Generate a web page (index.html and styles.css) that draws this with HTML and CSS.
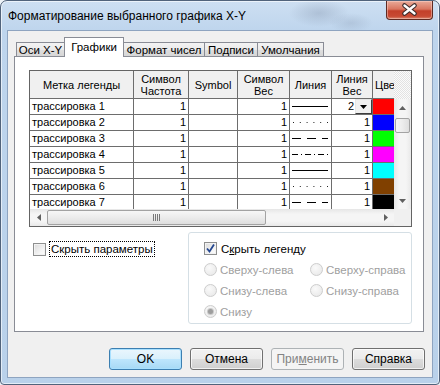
FILE: index.html
```html
<!DOCTYPE html>
<html lang="ru">

<head>
    <meta charset="UTF-8">
    <title>Форматирование выбранного графика X-Y</title>
    <link rel="stylesheet" href="styles.css">
</head>

<body>

    <div class="window">
        <div class="titlebar">
            <span class="title">Форматирование выбранного графика X-Y</span>
            <div class="close">
                <svg width="45" height="17" viewBox="0 0 45 17">
                    <path d="M17.5 4.5 L27.5 12.5 M27.5 4.5 L17.5 12.5" stroke="#3a2a2a" stroke-width="4.6" stroke-linecap="round" fill="none"/>
                    <path d="M17.5 4.5 L27.5 12.5 M27.5 4.5 L17.5 12.5" stroke="#ffffff" stroke-width="2.4" stroke-linecap="round" fill="none"/>
                </svg>
            </div>
        </div>

        <div class="client">
            <div class="tabs">
                <div class="tab t1">Оси X-Y</div>
                <div class="tab t2 active">Графики</div>
                <div class="tab t3">Формат чисел</div>
                <div class="tab t4">Подписи</div>
                <div class="tab t5">Умолчания</div>
            </div>

            <div class="page">
                <div class="grid">
                    <div class="grid-head">
                        <div class="row head">
                            <div class="cell">Метка легенды</div>
                            <div class="cell">Символ<br>Частота</div>
                            <div class="cell">Symbol</div>
                            <div class="cell">Символ<br>Вес</div>
                            <div class="cell">Линия</div>
                            <div class="cell">Линия<br>Вес</div>
                            <div class="cell last">Цве</div>
                        </div>
                    </div>
                    <div class="hatch"></div>

                    <div class="grid-body">
                        <div class="row">
                            <div class="cell name">трассировка 1</div>
                            <div class="cell num">1</div>
                            <div class="cell"></div>
                            <div class="cell num">1</div>
                            <div class="cell line"><svg width="36" height="3"><line x1="0" y1="1.5" x2="36" y2="1.5" stroke="#000"/></svg></div>
                            <div class="cell num edit"><span>2</span><div class="dd"><svg width="7" height="4"><polygon points="0,0 7,0 3.5,4" fill="#000"/></svg></div></div>
                            <div class="cell swatch red"></div>
                        </div>
                        <div class="row">
                            <div class="cell name">трассировка 2</div>
                            <div class="cell num">1</div>
                            <div class="cell"></div>
                            <div class="cell num">1</div>
                            <div class="cell line"><svg width="36" height="3"><line x1="1" y1="1.5" x2="36" y2="1.5" stroke="#222" stroke-dasharray="1 5.8"/></svg></div>
                            <div class="cell num">1</div>
                            <div class="cell swatch blue"></div>
                        </div>
                        <div class="row">
                            <div class="cell name">трассировка 3</div>
                            <div class="cell num">1</div>
                            <div class="cell"></div>
                            <div class="cell num">1</div>
                            <div class="cell line"><svg width="36" height="3"><line x1="0" y1="1.5" x2="36" y2="1.5" stroke="#000" stroke-dasharray="9 6"/></svg></div>
                            <div class="cell num">1</div>
                            <div class="cell swatch green"></div>
                        </div>
                        <div class="row">
                            <div class="cell name">трассировка 4</div>
                            <div class="cell num">1</div>
                            <div class="cell"></div>
                            <div class="cell num">1</div>
                            <div class="cell line"><svg width="36" height="3"><line x1="0" y1="1.5" x2="36" y2="1.5" stroke="#000" stroke-dasharray="6 3 1 3"/></svg></div>
                            <div class="cell num">1</div>
                            <div class="cell swatch magenta"></div>
                        </div>
                        <div class="row">
                            <div class="cell name">трассировка 5</div>
                            <div class="cell num">1</div>
                            <div class="cell"></div>
                            <div class="cell num">1</div>
                            <div class="cell line"><svg width="36" height="3"><line x1="0" y1="1.5" x2="36" y2="1.5" stroke="#000"/></svg></div>
                            <div class="cell num">1</div>
                            <div class="cell swatch cyan"></div>
                        </div>
                        <div class="row">
                            <div class="cell name">трассировка 6</div>
                            <div class="cell num">1</div>
                            <div class="cell"></div>
                            <div class="cell num">1</div>
                            <div class="cell line"><svg width="36" height="3"><line x1="1" y1="1.5" x2="36" y2="1.5" stroke="#222" stroke-dasharray="1 5.8"/></svg></div>
                            <div class="cell num">1</div>
                            <div class="cell swatch brown"></div>
                        </div>
                        <div class="row">
                            <div class="cell name">трассировка 7</div>
                            <div class="cell num">1</div>
                            <div class="cell"></div>
                            <div class="cell num">1</div>
                            <div class="cell line"><svg width="36" height="3"><line x1="0" y1="1.5" x2="36" y2="1.5" stroke="#000" stroke-dasharray="9 6"/></svg></div>
                            <div class="cell num">1</div>
                            <div class="cell swatch black"></div>
                        </div>
                    </div>

                    <div class="vscroll">
                        <div class="arrow"><svg width="7" height="4"><polygon points="0,4 7,4 3.5,0" fill="#606060"/></svg></div>
                        <div class="thumb-v"></div>
                        <div class="spacer"></div>
                        <div class="arrow"><svg width="7" height="4"><polygon points="0,0 7,0 3.5,4" fill="#606060"/></svg></div>
                    </div>

                    <div class="hscroll">
                        <div class="arrow"><svg width="4" height="7"><polygon points="4,0 4,7 0,3.5" fill="#606060"/></svg></div>
                        <div class="thumb-h">
                            <svg width="8" height="7"><path d="M0.5 0 V7 M2.5 0 V7 M4.5 0 V7 M6.5 0 V7" stroke="#7a7a7a"/></svg>
                        </div>
                        <div class="spacer"></div>
                        <div class="arrow"><svg width="4" height="7"><polygon points="0,0 0,7 4,3.5" fill="#606060"/></svg></div>
                    </div>
                    <div class="corner"></div>
                </div>

                <div class="options">
                    <div class="opt-left">
                        <div class="check">
                            <span class="box"></span>
                            <span class="label focus">Скрыть параметры</span>
                        </div>
                    </div>

                    <div class="group">
                        <div class="check wide">
                            <span class="box"><svg width="11" height="11"><path d="M2 5.5 L4.5 8.5 L9 1.5" stroke="#23468f" stroke-width="1.8" fill="none"/></svg></span>
                            <span class="label">С<u>к</u>рыть легенду</span>
                        </div>
                        <div class="radio-row"><span class="radio"></span><span class="off">Сверху-слева</span></div>
                        <div class="radio-row"><span class="radio"></span><span class="off">Сверху-справа</span></div>
                        <div class="radio-row"><span class="radio"></span><span class="off">Снизу-слева</span></div>
                        <div class="radio-row"><span class="radio"></span><span class="off">Снизу-справа</span></div>
                        <div class="radio-row"><span class="radio on"><span class="dot"></span></span><span class="off">Снизу</span></div>
                    </div>
                </div>
            </div>

            <div class="buttons">
                <button class="btn default">OK</button>
                <button class="btn">Отмена</button>
                <button class="btn disabled">При<u>м</u>енить</button>
                <button class="btn">Справка</button>
            </div>
        </div>
    </div>

</body>

</html>
```

FILE: styles.css
```css
* {
    margin: 0;
    padding: 0;
    box-sizing: border-box;
}

body {
    width: 440px;
    height: 385px;
    overflow: hidden;
    background-color: #eef3f8;
    font-family: "Liberation Sans", Arial, sans-serif;
    font-size: 12px;
    color: #000;
}

.window {
    width: 440px;
    height: 385px;
    border: 1px solid #51637b;
    border-radius: 7px 7px 4px 4px;
    background:
        radial-gradient(ellipse 30px 14px at 318px 12px, rgba(110, 125, 150, 0.28), transparent),
        radial-gradient(ellipse 22px 10px at 350px 22px, rgba(110, 125, 150, 0.2), transparent),
        linear-gradient(to bottom, #cddff2 0, #bed5ed 30px, #b9d1ea 100%);
    box-shadow: inset 0 0 0 1px rgba(255, 255, 255, 0.6);
    display: flex;
    flex-direction: column;
}

/* заголовок окна */
.titlebar {
    height: 29px;
    display: flex;
    justify-content: space-between;
    align-items: flex-start;
    padding-left: 7px;
}

.title {
    padding-top: 8px;
    font-size: 12px;
    line-height: 15px;
}

.close {
    width: 47px;
    height: 19px;
    margin-right: 6px;
    border: 1px solid #5e2a22;
    border-top: none;
    border-radius: 0 0 4px 4px;
    background: linear-gradient(to bottom, #e9aa99 0, #d97660 45%, #c3402a 55%, #c84a33 85%, #d98a72 100%);
    box-shadow: inset 0 0 0 1px rgba(255, 220, 210, 0.45);
}

.close svg {
    display: block;
}

/* клиентская часть */
.client {
    margin: 0 6px 6px 6px;
    height: 348px;
    border: 1px solid #8ea4c0;
    background-color: #f0f0f0;
    padding: 6px 8px 7px 6px;
    display: flex;
    flex-direction: column;
}

.tabs {
    height: 19px;
    display: flex;
    align-items: flex-end;
    padding-left: 2px;
}

.tab {
    height: 14px;
    border: 1px solid #898c95;
    border-bottom: none;
    margin-right: -1px;
    padding-top: 1px;
    background: linear-gradient(to bottom, #f3f3f3 0, #ebebeb 50%, #dfdfdf 50%, #d6d6d6 100%);
    font-size: 11.5px;
    line-height: 13px;
    text-align: center;
    white-space: nowrap;
}

.tab.active {
    height: 20px;
    margin-bottom: -1px;
    padding-top: 3px;
    background: #ffffff;
    position: relative;
    z-index: 1;
}

.t1 { width: 49px; }
.t2 { width: 60px; }
.t3 { width: 82px; }
.t4 { width: 54px; }
.t5 { width: 67px; }

.page {
    height: 276px;
    border: 1px solid #898c95;
    background-color: #ffffff;
    padding: 13px 0 0 14px;
}

/* таблица */
.grid {
    width: 383px;
    height: 157px;
    border: 1px solid #646464;
    display: grid;
    grid-template-columns: 364px 17px;
    grid-template-rows: 28px 110px 17px;
    font-size: 11px;
}

.grid-head,
.grid-body {
    overflow: hidden;
}

.row {
    display: grid;
    grid-template-columns: 104px 55px 49px 52px 42px 41px 28px;
    width: 371px;
}

.cell {
    height: 16px;
    border-right: 1px solid #6d6d6d;
    border-bottom: 1px solid #6d6d6d;
    line-height: 15px;
    white-space: nowrap;
    overflow: hidden;
}

.head .cell {
    height: 28px;
    background-color: #f0f0f0;
    display: flex;
    align-items: center;
    justify-content: center;
    text-align: center;
    line-height: 12px;
}

.head .last {
    justify-content: flex-start;
    padding-left: 2px;
    border-right: none;
}

.name {
    padding-left: 2px;
}

.num {
    text-align: right;
    padding-right: 2px;
}

.line {
    display: flex;
    align-items: center;
    padding-left: 2px;
}

.line svg {
    display: block;
}

.edit {
    display: flex;
    justify-content: flex-end;
    padding-right: 0;
}

.edit span {
    padding-right: 1px;
}

.dd {
    width: 17px;
    height: 15px;
    border: 1px solid;
    border-color: #e6e6e6 #3c3c3c #3c3c3c #e6e6e6;
    background-color: #f0f0f0;
    display: flex;
    align-items: center;
    justify-content: center;
}

.swatch { border-right: none; }
.red { background-color: #ff0000; }
.blue { background-color: #0000ff; }
.green { background-color: #00ff00; }
.magenta { background-color: #ff00ff; }
.cyan { background-color: #00ffff; }
.brown { background-color: #804000; }
.black { background-color: #000000; }

.hatch {
    background-image: repeating-conic-gradient(#e2e2e2 0 25%, #fbfbfb 0 50%);
    background-size: 2px 2px;
}

.vscroll {
    display: flex;
    flex-direction: column;
    background: linear-gradient(to right, #e6e6e6, #f5f5f5 30%, #f5f5f5 70%, #e9e9e9);
}

.hscroll {
    display: flex;
    background: linear-gradient(to bottom, #e6e6e6, #f5f5f5 30%, #f5f5f5 70%, #e9e9e9);
}

.arrow {
    width: 17px;
    height: 17px;
    flex: none;
    display: flex;
    align-items: center;
    justify-content: center;
}

.spacer {
    flex: 1;
}

.thumb-v {
    height: 15px;
    margin: 2px 1px 0 1px;
    border: 1px solid #a3a3a3;
    border-radius: 2px;
    background: linear-gradient(to right, #f7f7f7, #ececec 50%, #dedede);
}

.thumb-h {
    width: 219px;
    margin: 1px 0;
    border: 1px solid #a3a3a3;
    border-radius: 2px;
    background: linear-gradient(to bottom, #f7f7f7, #ececec 50%, #dedede);
    display: flex;
    align-items: center;
    justify-content: center;
}

.corner {
    background-color: #f0f0f0;
}

/* параметры под таблицей */
.options {
    display: flex;
    margin-top: 5px;
    font-size: 11.5px;
}

.opt-left {
    width: 159px;
    padding: 9px 0 0 4px;
}

.check {
    display: flex;
    align-items: center;
}

.box {
    width: 13px;
    height: 13px;
    border: 1px solid #8e8f8f;
    background: linear-gradient(135deg, #dadada, #f6f6f6 70%, #fdfdfd);
    box-shadow: inset 0 0 0 1px #f2f2f2;
    display: flex;
    align-items: center;
    justify-content: center;
    flex: none;
}

.box svg {
    display: block;
}

.label {
    margin-left: 3px;
    padding: 0 1px;
    line-height: 14px;
    border: 1px solid transparent;
    white-space: nowrap;
}

.label.focus {
    border: 1px dotted #000;
}

.group {
    width: 224px;
    height: 92px;
    border: 1px solid #d5dfe5;
    border-radius: 3px;
    padding: 5px 0 0 15px;
    display: grid;
    grid-template-columns: 106px auto;
    grid-auto-rows: 21px;
    align-items: center;
}

.check.wide {
    grid-column: span 2;
}

.check.wide .label {
    margin-left: 2px;
}

.radio-row {
    display: flex;
    align-items: center;
    gap: 3px;
    white-space: nowrap;
}

.radio {
    width: 13px;
    height: 13px;
    border-radius: 50%;
    border: 1px solid #cdcdcd;
    background: radial-gradient(circle at 40% 35%, #fafafa, #e6e6e6);
    display: flex;
    align-items: center;
    justify-content: center;
}

.radio .dot {
    width: 5px;
    height: 5px;
    border-radius: 50%;
    background-color: #9d9d9d;
    box-shadow: 0 0 0 1px #c9c9c9;
}

.off {
    color: #a0a0a0;
}

/* кнопки */
.buttons {
    display: flex;
    justify-content: flex-end;
    gap: 8px;
    margin-top: 16px;
    margin-right: -1px;
}

.btn {
    width: 73px;
    height: 22px;
    border: 1px solid #707070;
    border-radius: 3px;
    background: linear-gradient(to bottom, #f2f2f2 0, #ebebeb 50%, #dddddd 50%, #cfcfcf 100%);
    box-shadow: inset 0 0 0 1px rgba(255, 255, 255, 0.7);
    font-family: "Liberation Sans", Arial, sans-serif;
    font-size: 12px;
    font-weight: 400;
    color: #000;
}

.btn.default {
    border-color: #3c7fb1;
    background: linear-gradient(to bottom, #eaf6fd 0, #d9f0fc 50%, #bee6fd 50%, #a7d9f5 100%);
    box-shadow: inset 0 0 0 1px #a8e0ff;
}

.btn.disabled {
    border-color: #adb2b5;
    background: #f4f4f4;
    box-shadow: none;
    color: #838383;
}
```
